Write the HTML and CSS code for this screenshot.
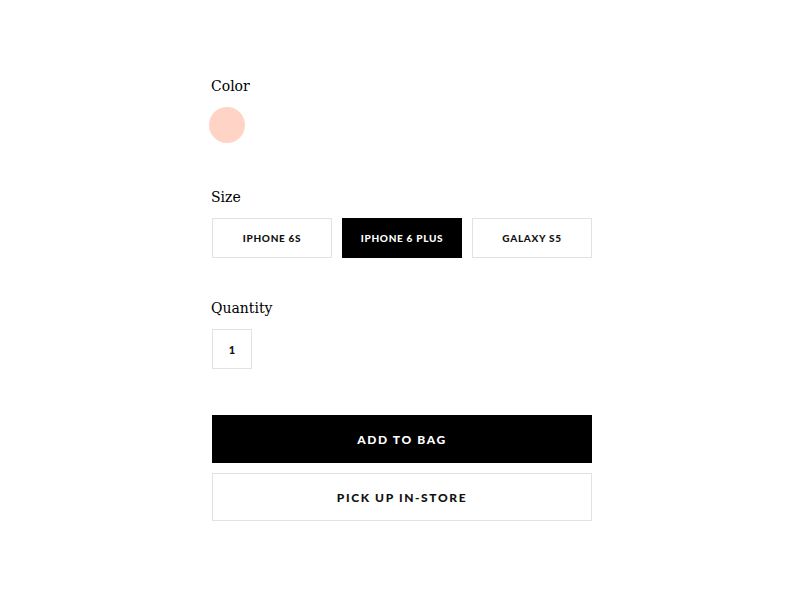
FILE: index.html
```html
<!DOCTYPE html>
<html lang="en">
<head>
  <meta charset="UTF-8" />
  <meta name="viewport" content="width=device-width, initial-scale=1.0"/>
  <title>Product Options</title>
  <link rel="stylesheet" href="styles.css">
</head>
<body>
  <div class="options">
    <div class="group group-color">
      <div class="label">Color</div>
      <div class="swatches">
        <span class="swatch"></span>
      </div>
    </div>

    <div class="group group-size">
      <div class="label">Size</div>
      <div class="sizes">
        <button class="opt">iPhone 6s</button>
        <button class="opt opt-active">iPhone 6 Plus</button>
        <button class="opt">Galaxy S5</button>
      </div>
    </div>

    <div class="group group-qty">
      <div class="label">Quantity</div>
      <div class="qty">1</div>
    </div>

    <div class="actions">
      <button class="btn btn-dark">Add to Bag</button>
      <button class="btn">Pick up In-Store</button>
    </div>
  </div>
</body>
</html>
```

FILE: styles.css
```css
body {
  margin: 0;
  background: #fff;
  color: #000;
  font-family: 'DejaVu Serif', serif;
}
.options {
  width: 380px;
  margin: 0 auto;
  padding-top: 76px;
  padding-left: 4px;
}
.label {
  font-size: 14px;
  line-height: 20px;
  margin-left: -1px;
  margin-bottom: 11px;
}
.group-color {
  margin-bottom: 44px;
}
.group-size {
  margin-bottom: 40px;
}
.group-qty {
  margin-bottom: 46px;
}
.swatches {
  display: flex;
  margin-left: -3px;
}
.swatch {
  width: 36px;
  height: 36px;
  border-radius: 50%;
  background: #ffd4c6;
}
.sizes {
  display: flex;
  gap: 10px;
}
.opt, .btn, .qty {
  font-family: Lato, sans-serif;
  font-weight: 900;
  text-transform: uppercase;
  background: #fff;
  color: #111;
  border: 1px solid #e2e2e2;
  box-sizing: border-box;
  cursor: pointer;
}
.opt {
  width: 120px;
  height: 40px;
  font-size: 10px;
  letter-spacing: 0.7px;
  padding: 0;
}
.opt-active {
  background: #000;
  border-color: #000;
  color: #fff;
}
.qty {
  width: 40px;
  height: 40px;
  font-size: 11px;
  display: flex;
  align-items: center;
  justify-content: center;
}
.actions {
  display: flex;
  flex-direction: column;
  gap: 10px;
}
.btn {
  width: 380px;
  height: 48px;
  font-size: 12px;
  letter-spacing: 1.6px;
  padding: 0;
}
.btn-dark {
  background: #000;
  border-color: #000;
  color: #fff;
}
```
